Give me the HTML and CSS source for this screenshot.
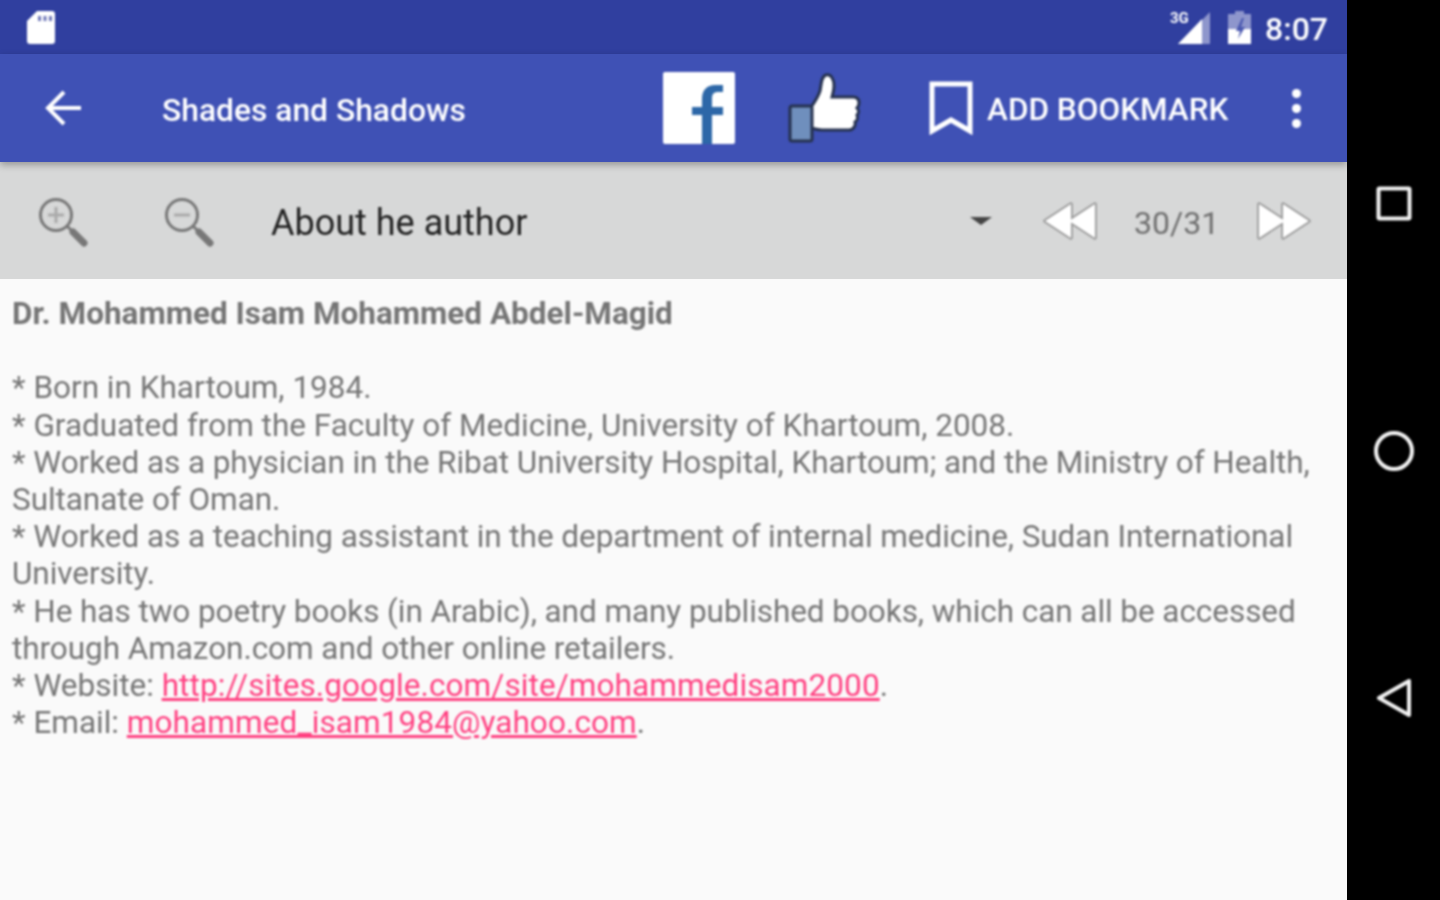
FILE: index.html
```html
<!DOCTYPE html>
<html lang="en">
<head>
<meta charset="utf-8">
<title>Shades and Shadows</title>
<link rel="stylesheet" href="styles.css">
</head>
<body>
<div class="screen">
  <main class="app">
    <header class="status">
      <svg class="sd" viewBox="0 0 28 33" width="28" height="33"><path d="M10 0H25a3 3 0 0 1 3 3V30a3 3 0 0 1-3 3H3a3 3 0 0 1-3-3V10Z" fill="#fff"/><path d="M11 5h3v5h-3zM16.500 5h3v5h-3zM22 5h3v5h-3z" fill="#6f78b8"/></svg>
      <div class="status-right">
        <div class="signal">
          <span class="net">3G</span>
          <svg viewBox="0 0 32 32" width="32" height="32"><path d="M32 0V32H0Z" fill="#8e96cc"/><path d="M24 7V32H0Z" fill="#fff"/></svg>
        </div>
        <svg class="battery" viewBox="0 0 23 33" width="23" height="33"><path d="M7 0h9v3h7v30H0V3h7Z" fill="#8e96cc"/><path d="M0 18H23V33H0Z" fill="#fff"/><path d="M14 7 8 20h4l-2 8 7-12h-4l3-9Z" fill="#4a58b0"/></svg>
        <span class="clock">8:07</span>
      </div>
    </header>

    <nav class="toolbar">
      <svg class="back" viewBox="0 0 38 36" width="38" height="36"><path d="M36 18H4M19 2 3 18l16 16" fill="none" stroke="#fff" stroke-width="4"/></svg>
      <h1 class="title">Shades and Shadows</h1>
      <svg class="fb" viewBox="0 0 72 72" width="72" height="72"><rect width="72" height="72" rx="2" fill="#fff"/><path d="M39 72V43H29V35h10v-8c0-9 5-14 13-14h8v7h-5c-4 0-6 2-6 6v9h11v8H49v29Z" fill="#2d67a8"/></svg>
      <svg class="like" viewBox="0 0 74 70" width="74" height="70"><path d="M23 34c3-4 7-10 9-16 1-4 1-15 6-16 5-1 8 4 8 11 0 4-1 7-2 11h21c4 0 6 2 6 6 0 3-1 4-2 5 2 2 2 5 0 7 1 3 0 6-2 7 1 4-2 8-6 8H34c-4 0-7-1-11-2Z" fill="#fff" stroke="#26324f" stroke-width="3"/><rect x="2" y="33" width="22" height="35" rx="2" fill="#6f8fbd" stroke="#26324f" stroke-width="3"/></svg>
      <svg class="mark" viewBox="0 0 44 54" width="44" height="54"><path d="M3 3H41V50L22 39 3 50Z" fill="none" stroke="#fff" stroke-width="5"/></svg>
      <span class="action">ADD BOOKMARK</span>
      <div class="dots"><i></i><i></i><i></i></div>
    </nav>

    <section class="subbar">
      <svg class="zoom-in" viewBox="0 0 50 50" width="50" height="50"><circle cx="18" cy="18" r="15.500" fill="none" stroke="#777" stroke-width="3"/><path d="M18 10v16M10 18h16" stroke="#aaa" stroke-width="3"/><path d="M29 29 36 36" stroke="#777" stroke-width="3"/><path d="M35 35 46 46" stroke="#777" stroke-width="7" stroke-linecap="round"/></svg>
      <svg class="zoom-out" viewBox="0 0 50 50" width="50" height="50"><circle cx="18" cy="18" r="15.500" fill="none" stroke="#777" stroke-width="3"/><path d="M10 18h16" stroke="#aaa" stroke-width="3"/><path d="M29 29 36 36" stroke="#777" stroke-width="3"/><path d="M35 35 46 46" stroke="#777" stroke-width="7" stroke-linecap="round"/></svg>
      <span class="chapter">About he author</span>
      <span class="caret"></span>
      <svg class="rew" viewBox="0 0 54 38" width="54" height="38"><path d="M28 2v34L2 19ZM52 2v34L26 19Z" fill="none" stroke="#999" stroke-width="3.500" stroke-linejoin="round"/><path d="M28 2v34L2 19ZM52 2v34L26 19Z" fill="#fff"/></svg>
      <span class="pages">30/31</span>
      <svg class="fwd" viewBox="0 0 54 38" width="54" height="38"><path d="M2 2v34l26-17ZM26 2v34l26-17Z" fill="none" stroke="#999" stroke-width="3.500" stroke-linejoin="round"/><path d="M2 2v34l26-17ZM26 2v34l26-17Z" fill="#fff"/></svg>
    </section>

    <article class="content">
      <p class="heading">Dr. Mohammed Isam Mohammed Abdel-Magid</p>
      <p class="blank">&nbsp;</p>
      <p>* Born in Khartoum, 1984.</p>
      <p>* Graduated from the Faculty of Medicine, University of Khartoum, 2008.</p>
      <p class="tight">* Worked as a physician in the Ribat University Hospital, Khartoum; and the Ministry of Health, Sultanate of Oman.</p>
      <p class="tight">* Worked as a teaching assistant in the department of internal medicine, Sudan International University.</p>
      <p class="tight">* He has two poetry books (in Arabic), and many published books, which can all be accessed through Amazon.com and other online retailers.</p>
      <p>* Website: <a href="#">http://sites.google.com/site/mohammedisam2000</a>.</p>
      <p>* Email: <a href="#">mohammed_isam1984@yahoo.com</a>.</p>
    </article>
  </main>

  <aside class="navbar">
    <svg class="nav-recent" viewBox="0 0 36 36" width="36" height="36"><rect x="2.500" y="2.500" width="31" height="30" rx="1" fill="none" stroke="#f2f2f2" stroke-width="4"/></svg>
    <svg class="nav-home" viewBox="0 0 42 40" width="42" height="40"><circle cx="21" cy="20" r="18" fill="none" stroke="#f2f2f2" stroke-width="4"/></svg>
    <svg class="nav-back" viewBox="0 0 36 40" width="36" height="40"><path d="M33 3V37L3 20Z" fill="none" stroke="#f2f2f2" stroke-width="4" stroke-linejoin="round"/></svg>
  </aside>
</div>
</body>
</html>
```

FILE: styles.css
```css
* { box-sizing: border-box; }
html, body { margin: 0; height: 100%; overflow: hidden; }
body { font-family: Roboto, "Liberation Sans", sans-serif; background: #000; }
.screen { display: flex; width: 1440px; height: 900px; }
.app { width: 1347px; display: flex; flex-direction: column; background: #fafafa; }

/* the reference is a soft, upscaled capture */
.status > *, .toolbar > *, .subbar > *, .content > *, .navbar > * { filter: blur(0.8px); }

.status { height: 54px; flex: none; background: #303f9f; display: flex; align-items: center; padding: 0 19px 0 27px; color: #fff; }
.status-right { margin-left: auto; display: flex; align-items: center; }
.signal { position: relative; width: 40px; height: 33px; margin-right: 18px; display: flex; justify-content: flex-end; align-items: flex-end; }
.net { position: absolute; left: 0; top: -2px; font-size: 15px; font-weight: 700; line-height: 18px; }
.battery { margin-right: 14px; }
.clock { margin-top: 4px; font-size: 32px; font-weight: 500; line-height: 40px; }

.toolbar { height: 108px; flex: none; background: #3f51b5; display: flex; align-items: center; color: #fff; position: relative; z-index: 1; box-shadow: 0 3px 7px rgba(0,0,0,.3); }
.back { margin-left: 45px; }
.title { margin: 4px 0 0 79px; font-size: 31.800px; font-weight: 500; line-height: 40px; width: 501px; white-space: nowrap; }
.like { margin-left: 53px; }
.mark { margin-left: 67px; }
.action { margin: 4px 0 0 14px; font-size: 31.500px; font-weight: 500; line-height: 40px; white-space: nowrap; }
.dots { margin-left: 64px; display: flex; flex-direction: column; gap: 6px; }
.dots i { display: block; width: 9px; height: 9px; border-radius: 50%; background: #fff; }

.subbar { height: 117px; flex: none; background: #d7d8d8; display: flex; align-items: center; color: #222; }
.zoom-in { margin: 2px 0 0 38px; }
.zoom-out { margin: 2px 0 0 76px; }
.chapter { margin: 4px 0 0 57px; width: 699px; font-size: 36px; line-height: 44px; white-space: nowrap; }
.caret { width: 0; height: 0; border-style: solid; border-width: 8px 11px 0; border-color: #444 transparent transparent; }
.rew { margin-left: 51px; }
.pages { margin: 4px 0 0 37px; font-size: 32px; line-height: 40px; color: #6f6f6f; }
.fwd { margin-left: 38px; }

.content { flex: 1; padding: 16px 12px 0; font-size: 31.500px; line-height: 37.180px; color: #757575; }
.content p { margin: 0; }
.heading { font-weight: 700; }
.content .tight { letter-spacing: -0.06px; }
.content a { color: #ff4081; text-decoration: underline; letter-spacing: 0.1px; }

.navbar { width: 93px; background: #000; display: flex; flex-direction: column; align-items: center; padding-top: 186px; }
.nav-home { margin-top: 209px; }
.nav-back { margin-top: 207px; }
```
